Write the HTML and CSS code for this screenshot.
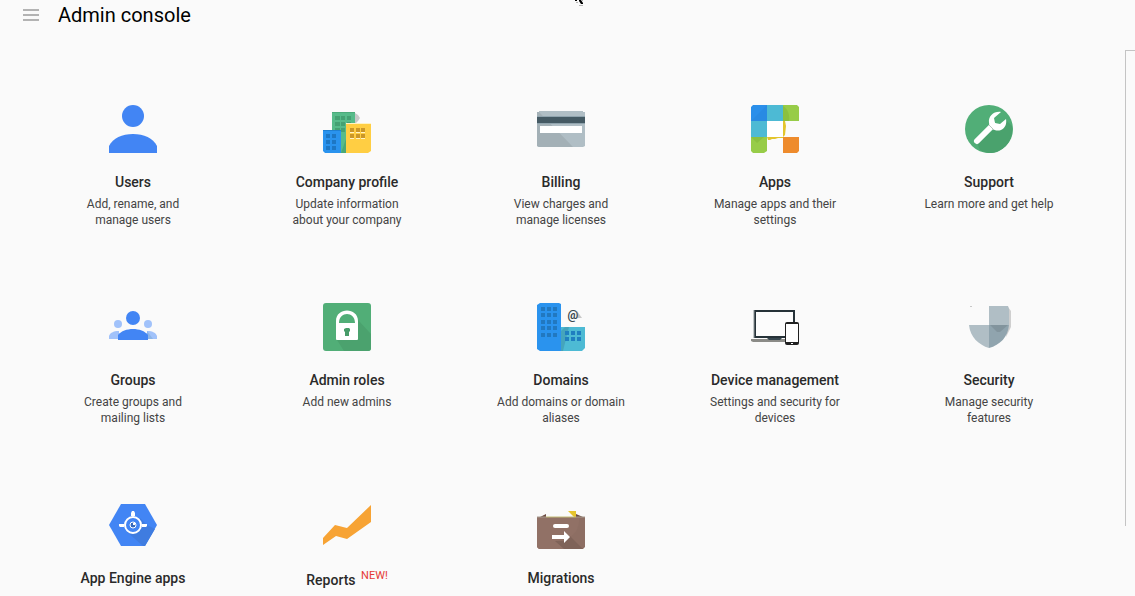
FILE: index.html
```html
<!DOCTYPE html>
<html lang="en">
<head>
<meta charset="utf-8">
<title>Admin console</title>
<link rel="stylesheet" href="styles.css">
</head>
<body>
<header class="topbar">
  <button class="menu-button" type="button" aria-label="Main menu">
    <svg class="menu-icon" viewBox="0 0 16 12" aria-hidden="true"><path d="M0 0h16v2H0zM0 5h16v2H0zM0 10h16v2H0z" fill="#b3b3b3"/></svg>
  </button>
  <h1 class="title">Admin console</h1>
</header>
<svg class="pointer" viewBox="0 0 10 6" aria-hidden="true"><path d="M0 0h2v1H0zM4 0h2l2 3v1H6L4 1z" fill="#000"/><path d="M1 2h2v1H1zM7 0h1v1H7zM4 5h4v1H4z" fill="#b5b5b5"/></svg>
<main class="content">
  <nav aria-label="Admin tools">
  <ul class="grid">
    <li><a class="card" href="#users">
      <svg class="icon" viewBox="0 0 48 48" aria-hidden="true"><circle cx="24" cy="11" r="11" fill="#4285f4"/><path d="M0 48V41C4 33 13 29 24 29s20 4 24 12v7z" fill="#4285f4"/></svg>
      <h2 class="name">Users</h2><p class="desc">Add, rename, and manage users</p></a></li>
    <li><a class="card" href="#company">
      <svg class="icon" viewBox="0 0 48 48" aria-hidden="true">
        <path d="M32 8l3 2 2 3-2 3-3 3z" fill="#c8c8c8"/>
        <path d="M9 7h23v41H9z" fill="#57bb8a"/><path d="M9 7h23v1H9z" fill="#4caa7a"/><path d="M18 48l5-14v14z" fill="#4aa877"/>
        <path d="M12 11h5v4h-5zM18 11h4v4h-4zM24 11h4v4h-4zM12 17h5v4h-5zM18 17h4v4h-4zM24 17h4v4h-4zM12 23h5v2h-5zM18 23h4v4h-4z" fill="#45a173"/>
        <path d="M0 25h18v23H2l-2-2z" fill="#2a93ee"/><path d="M0 25h18v1H0z" fill="#1f80d2"/>
        <path d="M3 29h4v4H3zM9 29h4v4H9zM3 35h4v4H3zM9 35h4v4H9zM3 41h4v4H3zM9 41h4v4H9z" fill="#1d77c4"/>
        <path d="M23 19h25v27l-3 2H23z" fill="#ffce43"/><path d="M23 18h25v1H23z" fill="#fff3c4"/>
        <path d="M27 23h4v4h-4zM33 23h4v4h-4zM38 23h4v4h-4zM27 29h4v4h-4zM33 29h4v4h-4zM38 29h4v4h-4z" fill="#cb9728"/>
        <path d="M27 27h4v1h-4zM33 27h4v1h-4zM38 27h4v1h-4zM27 33h4v1h-4zM33 33h4v1h-4zM38 33h4v1h-4z" fill="#fff3c4"/>
      </svg>
      <h2 class="name">Company profile</h2><p class="desc">Update information about your company</p></a></li>
    <li><a class="card" href="#billing">
      <svg class="icon" viewBox="0 0 48 48" aria-hidden="true">
        <path d="M2 6h44v1h2v34l-2 1H2l-2-1V7h2z" fill="#b0bec5"/><path d="M0 7h2l34 35H2l-2-1z" fill="#a3b0b6"/>
        <path d="M0 11h48v8H0z" fill="#90a4ae"/><path d="M0 12h48v6H0z" fill="#455a64"/><path d="M3 21h42v7H3z" fill="#fff"/>
      </svg>
      <h2 class="name">Billing</h2><p class="desc">View charges and manage licenses</p></a></li>
    <li><a class="card" href="#apps">
      <svg class="icon" viewBox="0 0 48 48" aria-hidden="true">
        <path d="M2 0h14v16H0V2z" fill="#2a8fea"/><path d="M16 0v16H0z" fill="#288ae3"/>
        <path d="M16 0h16v16H16zM0 16h16v16H0z" fill="#4dbad4"/><path d="M16 16h16v16H16z" fill="#fff"/>
        <path d="M32 0h14l2 2v14H32zM0 32h16v14l-3 2H2l-2-2z" fill="#97cc48"/><path d="M32 1c5 3 7 9 6 15h-6zM0 32h13l-7 6z" fill="#8bc040"/>
        <path d="M32 32h16v14l-2 2H32z" fill="#ee8b2c"/>
        <path d="M32 16h2l1 5-1 9-2 2zM16 32h16v1h-5l-3 1h-3l-2 1h-2z" fill="#e3c52d"/>
      </svg>
      <h2 class="name">Apps</h2><p class="desc">Manage apps and their settings</p></a></li>
    <li><a class="card" href="#support">
      <svg class="icon" viewBox="0 0 48 48" aria-hidden="true">
        <circle cx="24" cy="24" r="24" fill="#51ae77"/><path d="M41 15l6 6c2 11-5 22-15 26-7 2-12 1-17-2l-3-7z" fill="#4aa26d"/>
        <path d="M12 36L28 20" stroke="#fff" stroke-width="6" stroke-linecap="round"/>
        <path d="M36 7c-7-1-13 4-12 11 1 6 7 9 12 7 4-2 6-6 5-11l-6 5-5-1-1-5z" fill="#fff"/>
        <path d="M24 20l5 5" stroke="#b8c4bc" stroke-width="1"/>
      </svg>
      <h2 class="name">Support</h2><p class="desc">Learn more and get help</p></a></li>
    <li><a class="card" href="#groups">
      <svg class="icon" viewBox="0 0 48 48" aria-hidden="true">
        <circle cx="9" cy="21" r="4" fill="#a1c2fa"/><circle cx="39" cy="21" r="4" fill="#a1c2fa"/>
        <path d="M0 36v-3c1-3 4-5 10-5v8zM48 36v-3c-1-3-4-5-10-5v8z" fill="#a1c2fa"/><path d="M38 28l6 8h-6z" fill="#8bb4e8"/>
        <circle cx="24" cy="15" r="7" fill="#4285f4"/><path d="M9 37v-5c3-4 9-6 15-6s12 2 15 6v5z" fill="#4285f4"/>
      </svg>
      <h2 class="name">Groups</h2><p class="desc">Create groups and mailing lists</p></a></li>
    <li><a class="card" href="#roles">
      <svg class="icon" viewBox="0 0 48 48" aria-hidden="true">
        <rect width="48" height="48" rx="3" fill="#51ae77"/><path d="M35 17l13 14v14q0 3-3 3H21l-7-11z" fill="#4ba26e"/>
        <path d="M14 37q-1 0-1-1V18C13 4 35 4 35 18v18q0 1-1 1zM16 20h16C32 8 16 8 16 20z" fill="#fff" fill-rule="evenodd"/>
        <path d="M23 25h3l1 1v2l-1 1v4h-4v-4l-1-1v-2z" fill="#479c69"/>
      </svg>
      <h2 class="name">Admin roles</h2><p class="desc">Add new admins</p></a></li>
    <li><a class="card" href="#domains">
      <svg class="icon" viewBox="0 0 48 48" aria-hidden="true">
        <path d="M3 0h19l2 1v47H3l-3-2V2z" fill="#2a93ee"/><path d="M24 24h24v21l-3 3H24z" fill="#4dbad4"/><path d="M24 28l4-4h4L26 48h-2z" fill="#45a4bc"/>
        <path d="M4 4h4v4H4zM10 4h4v4h-4zM16 4h4v4h-4zM4 10h4v4H4zM10 10h4v4h-4zM16 10h4v4h-4zM4 17h4v4H4zM10 17h4v4h-4zM16 17h4v4h-4zM4 23h4v4H4zM10 23h4v4h-4zM16 23h4v4h-4zM4 30h4v4H4zM10 30h4v4h-4zM16 30h4v4h-4z" fill="#2178c0"/>
        <path d="M28 28h4v4h-4zM34 28h4v4h-4zM40 28h4v4h-4zM28 34h4v4h-4zM34 34h4v4h-4zM40 34h4v4h-4z" fill="#1f7fc0"/>
        <path d="M40 8l5 7h-6z" fill="#c8c8c8"/>
        <text x="36" y="16" text-anchor="middle" class="at-sign">@</text>
      </svg>
      <h2 class="name">Domains</h2><p class="desc">Add domains or domain aliases</p></a></li>
    <li><a class="card" href="#devices">
      <svg class="icon" viewBox="0 0 48 48" aria-hidden="true">
        <path d="M0 36h35v3H2l-2-1z" fill="#8b8b87"/><rect x="4" y="8" width="39" height="26" fill="#fcfcfc" stroke="#263238" stroke-width="2"/>
        <path d="M3 7v28" stroke="#8b9497" stroke-width="1"/><path d="M16 35h15l-2 2H18z" fill="#37474f"/>
        <rect x="34" y="19" width="14" height="23" rx="2" fill="#212121"/><path d="M35 21h12v18H35z" fill="#fff"/><path d="M40 40h2v1h-2z" fill="#fff"/>
      </svg>
      <h2 class="name">Device management</h2><p class="desc">Settings and security for devices</p></a></li>
    <li><a class="card" href="#security">
      <svg class="icon" viewBox="0 0 48 48" aria-hidden="true">
        <path d="M43 4l3 4v16l-5 10z" fill="#cfcfcf"/><path d="M5 3h2v1H5z" fill="#c8c8c8"/>
        <path d="M24 3h19l1 3v16H24zM4 22h20v23C14 42 5 34 4 22z" fill="#b0bec5"/>
        <path d="M24 22h20c-1 12-9 20-20 23z" fill="#90a4ae"/><path d="M25 22h18l-8 7h-3z" fill="#82949d"/>
      </svg>
      <h2 class="name">Security</h2><p class="desc">Manage security features</p></a></li>
    <li><a class="card" href="#appengine">
      <svg class="icon" viewBox="0 0 48 48" aria-hidden="true">
        <path d="M12 3h24l12 21-12 21H12L0 24z" fill="#4285f4"/><path d="M38 24l8 4-10 17h-2L17 30l14-13z" fill="#3f7ce0"/>
        <circle cx="24" cy="24" r="8" fill="#4285f4" stroke="#fff" stroke-width="2"/>
        <path d="M22 15v-3l1-2h2l1 2v3zM15 26h-4l-1-1v-2h5zM33 26h4l1-1v-2h-5z" fill="#fff"/>
        <circle cx="24" cy="24" r="3" fill="#3568bd" stroke="#fff" stroke-width="1"/><path d="M24 22h2v2h-2z" fill="#fff"/>
      </svg>
      <h2 class="name">App Engine apps</h2></a></li>
    <li><a class="card" href="#reports">
      <svg class="icon" viewBox="0 0 48 48" aria-hidden="true"><path d="M0 44v-7l12-13 12 3L48 4v17L24 38l-11-3z" fill="#f7a334"/></svg>
      <h2 class="name">Reports <sup class="badge">NEW!</sup></h2></a></li>
    <li><a class="card" href="#migrations">
      <svg class="icon" viewBox="0 0 48 48" aria-hidden="true">
        <path d="M3 16l6-3v4H3zM39 13l7 3v1h-7z" fill="#6d4c41"/><path d="M31 10h8v6h-2z" fill="#e6c52d"/>
        <path d="M0 16h48v30l-2 2H2l-2-2z" fill="#8d6e63"/><path d="M0 16h42c1 13-6 20-14 22L18 40 30 48H2l-2-2z" fill="#917166"/><path d="M18 40h10l5-5 13 13H27z" fill="#7f6359"/>
        <path d="M0 16h9M39 16h9" stroke="#a79a8f"/><path d="M9 16h30" stroke="#c4bd79"/>
        <rect x="16" y="23" width="16" height="4" rx="2" fill="#fff"/>
        <path d="M15 34h12v-4l6 6-6 6v-4H15z" fill="#fff"/>
      </svg>
      <h2 class="name">Migrations</h2></a></li>
  </ul>
  </nav>
  <aside class="edge-panel" aria-label="Side panel"></aside>
</main>
</body>
</html>
```

FILE: styles.css
```css
* { box-sizing: border-box; }

body {
  margin: 0;
  background: #fafafa;
  color: #2a2a2a;
  font-family: Roboto, "Liberation Sans", sans-serif;
  overflow-x: hidden;
}

.topbar {
  display: flex;
  align-items: center;
  gap: 19px;
  height: 30px;
  padding: 0 23px;
}

.menu-button {
  display: flex;
  padding: 0;
  border: 0;
  background: none;
  cursor: pointer;
}

.menu-icon { width: 16px; height: 12px; }

.title {
  margin: 0;
  color: #000;
  font-size: 20px;
  font-weight: 400;
  line-height: 30px;
}

.pointer {
  position: absolute;
  top: 0;
  left: 575px;
  width: 10px;
  height: 6px;
}

.content {
  display: grid;
  grid-template-columns: 1fr 10px;
  column-gap: 29px;
  padding: 20px 0 0 26px;
}

.grid {
  display: grid;
  grid-template-columns: repeat(5, 1fr);
  grid-template-rows: 198px 198px auto;
  margin: 0;
  padding: 55px 0 0;
  list-style: none;
}

.card {
  display: flex;
  flex-direction: column;
  align-items: center;
  color: inherit;
  text-align: center;
  text-decoration: none;
}

.icon { width: 48px; height: 48px; }

.name {
  margin: 19px 0 4px;
  font-size: 14px;
  font-weight: 500;
  line-height: 20px;
}

.badge {
  margin-left: 2px;
  color: #e53935;
  font-size: 11px;
  font-weight: 400;
  line-height: 16px;
}

.desc {
  max-width: 134px;
  margin: 0;
  color: #444;
  font-size: 12px;
  line-height: 16px;
}

.at-sign {
  fill: #37474f;
  font-size: 12px;
  font-weight: 700;
}

.edge-panel {
  height: 476px;
  border: 1px solid #c4c4c4;
  border-width: 1px 0 0 1px;
}
```
